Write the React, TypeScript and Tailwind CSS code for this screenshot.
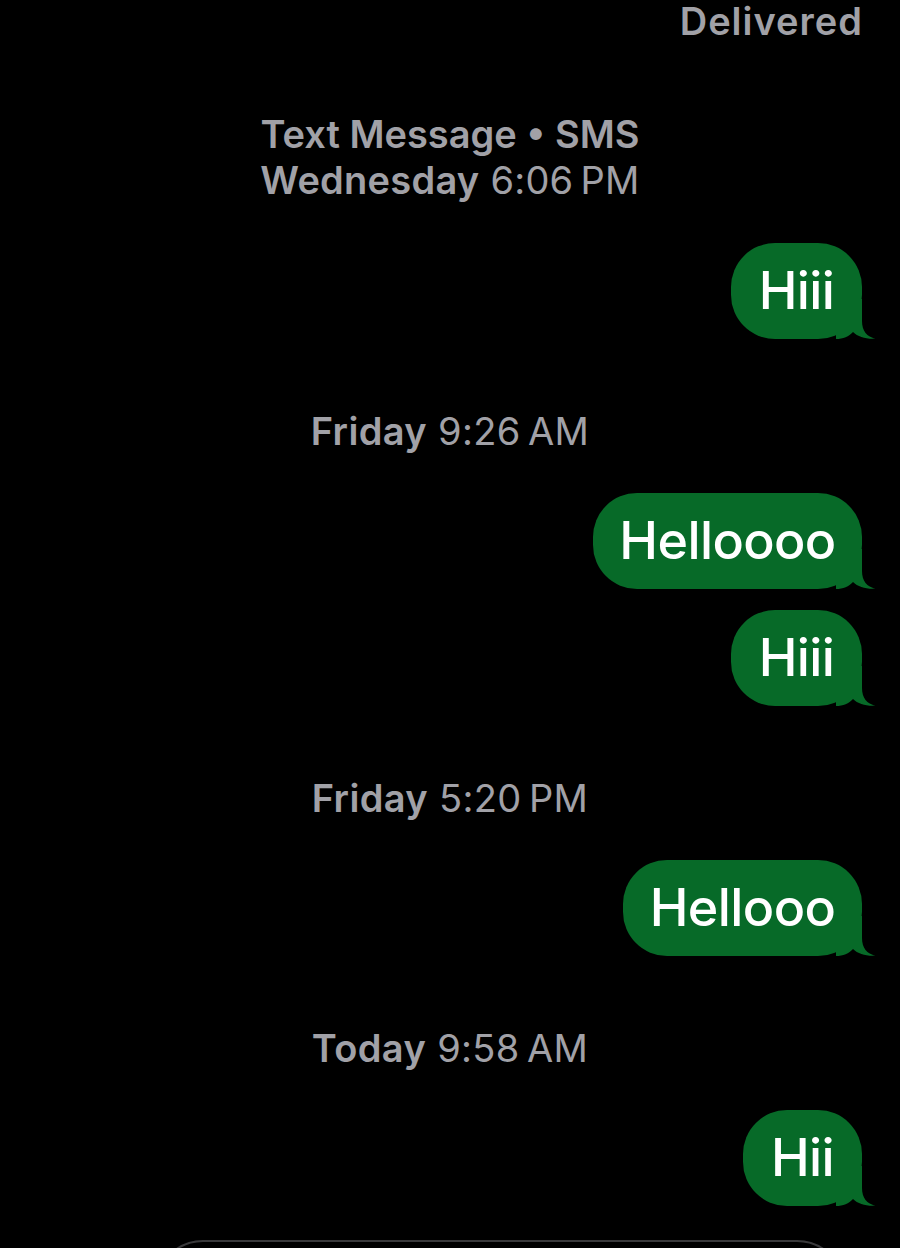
import React from "react";

const font = { fontFamily: "Inter, 'Noto Sans', 'Liberation Sans', sans-serif" };

function Tail() {
  return (
    <svg
      className="absolute right-[-14px] bottom-0"
      width="40"
      height="40"
      viewBox="0 0 40 40"
    >
      <path
        d="M0 0 H26 V22 C26 32 31 38 39.5 39.6 C31 40.4 22 38 17 33 C13 37.5 7 40 0 40 Z"
        fill="#076a28"
      />
    </svg>
  );
}

function Bubble({ text, w, mt }: { text: string; w: string; mt: string }) {
  return (
    <div className={`flex justify-end pr-[38px] ${mt}`}>
      <div
        className={`relative h-[96px] ${w} rounded-[44px] bg-[#076a28] flex items-center justify-center`}
      >
        <span className="relative z-10 text-white text-[52px] leading-none font-medium tracking-[-0.6px]">
          {text}
        </span>
        <Tail />
      </div>
    </div>
  );
}

function Stamp({ day, time, mt }: { day: string; time: string; mt: string }) {
  return (
    <div
      className={`${mt} h-[46px] text-center text-[38px] leading-[46px] text-[#a1a1a7] tracking-[0.35px]`}
    >
      <span className="font-semibold">{day}</span>{" "}
      <span className="font-normal">{time}</span>
    </div>
  );
}

export default function App() {
  return (
    <div
      className="w-[900px] h-[1248px] bg-black overflow-hidden flex flex-col"
      style={font}
    >
      <div className="shrink-0 pt-[1px] h-[41px] leading-[40px] text-[38px] font-semibold text-[#a1a1a7] text-right pr-[37px] tracking-[1px]">
        Delivered
      </div>

      <div className="mt-[70px] text-center text-[38px] leading-[46px] text-[#a1a1a7]">
        <div className="font-semibold tracking-[0px]">Text Message • SMS</div>
        <div className="tracking-[0.25px]">
          <span className="font-semibold">Wednesday</span>{" "}
          <span className="font-normal">6:06{"\u202F"}PM</span>
        </div>
      </div>

      <Bubble text="Hiii" w="w-[131px]" mt="mt-[40px]" />

      <Stamp day="Friday" time={"9:26\u202FAM"} mt="mt-[69px]" />

      <Bubble text="Helloooo" w="w-[269px]" mt="mt-[39px]" />
      <Bubble text="Hiii" w="w-[131px]" mt="mt-[21px]" />

      <Stamp day="Friday" time={"5:20\u202FPM"} mt="mt-[69px]" />

      <Bubble text="Hellooo" w="w-[239px]" mt="mt-[39px]" />

      <Stamp day="Today" time={"9:58\u202FAM"} mt="mt-[69px]" />

      <Bubble text="Hii" w="w-[119px]" mt="mt-[39px]" />

      <div className="mt-[34px] ml-[155px] w-[690px] h-[96px] shrink-0 rounded-[48px] border-2 border-[#3a3a3c]" />
    </div>
  );
}
